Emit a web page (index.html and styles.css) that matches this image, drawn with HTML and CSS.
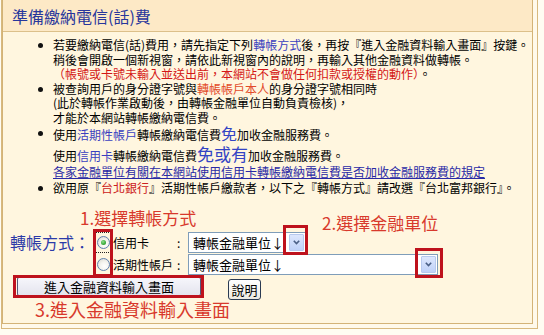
FILE: index.html
```html
<!DOCTYPE html>
<html lang="zh-Hant">
<head>
<meta charset="utf-8">
<title>準備繳納電信(話)費</title>
<link rel="stylesheet" href="styles.css">
</head>
<body>
<div class="outer">
  <div class="inner">
    <div class="head"><h1 class="title">準備繳納電信(話)費</h1></div>
    <div class="content">
      <ul class="notes">
        <li>若要繳納電信(話)費用，請先指定下列<span class="blue">轉帳方式</span>後，再按『進入金融資料輸入畫面』按鍵。<br>稍後會開啟一個新視窗，請依此新視窗內的說明，再輸入其他金融資料做轉帳。<br><span class="red">（帳號或卡號未輸入並送出前，本網站不會做任何扣款或授權的動作）</span>。</li>
        <li>被查詢用戶的身分證字號與<span class="orange">轉帳帳戶本人</span>的身分證字號相同時<br>(此於轉帳作業啟動後，由轉帳金融單位自動負責檢核)，<br>才能於本網站轉帳繳納電信費。</li>
        <li>使用<span class="blue">活期性帳戶</span>轉帳繳納電信費<span class="big">免</span>加收金融服務費。
          <div class="line2">使用<span class="blue">信用卡</span>轉帳繳納電信費<span class="big">免或有</span>加收金融服務費。</div>
          <div class="line3"><a class="rule-link" href="#">各家金融單位有關在本網站使用信用卡轉帳繳納電信費是否加收金融服務費的規定</a></div>
        </li>
        <li>欲用原『<span class="red2">台北銀行</span>』活期性帳戶繳款者，以下之『轉帳方式』請改選『台北富邦銀行』。</li>
      </ul>

      <div class="form">
        <div class="step step1">1.選擇轉帳方式</div>
        <div class="method">
          <div class="method-label">轉帳方式：</div>
          <div class="options">
            <span class="radio-cell focus"><span class="radio checked"></span></span>
            <span class="opt-label">信用卡</span>
            <span class="colon">:</span>
            <div class="select s1">
              <span class="sel-text">轉帳金融單位↓</span>
              <span class="sel-btn"><svg width="7" height="5" viewBox="0 0 7 5"><polyline points="0.8,0.8 3.5,3.6 6.2,0.8" fill="none" stroke="#4a5f86" stroke-width="1.6"/></svg></span>
            </div>
            <span class="radio-cell"><span class="radio"></span></span>
            <span class="opt-label">活期性帳戶</span>
            <span class="colon">:</span>
            <div class="select s2">
              <span class="sel-text">轉帳金融單位↓</span>
              <span class="sel-btn"><svg width="7" height="5" viewBox="0 0 7 5"><polyline points="0.8,0.8 3.5,3.6 6.2,0.8" fill="none" stroke="#4a5f86" stroke-width="1.6"/></svg></span>
            </div>
          </div>
        </div>
        <div class="actions">
          <button class="btn btn-main" type="button">進入金融資料輸入畫面</button>
          <button class="btn btn-help" type="button">說明</button>
        </div>
        <div class="step step3">3.進入金融資料輸入畫面</div>
      </div>
    </div>

    <div class="step step2">2.選擇金融單位</div>
    <span class="mark mark-radio"></span>
    <span class="mark mark-sel1"></span>
    <span class="mark mark-sel2"></span>
    <span class="mark mark-btn"></span>
  </div>
</div>
</body>
</html>
```

FILE: styles.css
```css
html, body {
  margin: 0;
  padding: 0;
  background: #fffcf2;
}
body {
  font-family: "Noto Sans CJK TC", "Noto Sans", sans-serif;
  font-size: 12px;
  color: #000;
}
.outer {
  margin-left: 1px;
  width: 531px;
  border: 1px solid #d8b97e;
  border-top: none;
  padding: 0 4px 4px 0;
  background: #fff9ea;
}
.inner {
  position: relative;
  border: 1px solid #d3b377;
  border-top: none;
  background: #fff6df;
  height: 324px;
  box-sizing: border-box;
}
.head {
  height: 31px;
  background: #fde9c6;
  border-bottom: 1px solid #dcc08a;
  display: flex;
  align-items: center;
  padding-left: 9px;
}
.title {
  margin: 0;
  font-size: 16px;
  font-weight: normal;
  color: #27369c;
  line-height: 20px;
}
.notes {
  list-style: none;
  margin: 6px 0 0;
  padding: 0 0 0 50px;
  white-space: nowrap;
  line-height: 14.6px;
}
.notes li {
  position: relative;
}
.notes li::before {
  content: "";
  position: absolute;
  left: -15px;
  top: 5px;
  width: 5px;
  height: 5px;
  border-radius: 50%;
  background: #111;
}
.blue { color: #3a3fc0; }
.red { color: #d41616; }
.red2 { color: #cc2020; }
.orange { color: #e24a2a; }
.big {
  font-size: 16px;
  color: #3344c4;
  line-height: 14px;
}
.line2 {
  margin-top: 4px;
  line-height: 19px;
}
.line2 .big { font-size: 17px; }
.line3 { line-height: 14.6px; margin-bottom: 1px; }
.rule-link {
  color: #2a2aa6;
  text-decoration: underline;
}

.form {
  margin-top: 12px;
}
.step {
  font-size: 17px;
  line-height: 22px;
  color: #d8392c;
  white-space: nowrap;
}
.step1 { margin-left: 77px; }
.step3 { margin-left: 32px; margin-top: -1px; font-size: 18px; line-height: 20px; }
.step2 {
  position: absolute;
  left: 319px;
  top: 212px;
}

.method {
  display: flex;
  align-items: flex-start;
  padding-left: 7px;
  margin-top: 3px;
}
.method-label {
  width: 84px;
  font-size: 16px;
  line-height: 21px;
  color: #2b3aa8;
  white-space: nowrap;
}
.options {
  display: grid;
  grid-template-columns: 19px 62px 13px auto;
  grid-auto-rows: 21px;
  row-gap: 1px;
  align-items: center;
}
.radio-cell {
  height: 21px;
  display: flex;
  align-items: center;
  justify-content: center;
  box-sizing: border-box;
}
.radio-cell.focus {
  outline: 1px dotted #222;
  outline-offset: -1px;
}
.radio {
  width: 13px;
  height: 13px;
  border-radius: 50%;
  border: 1px solid #5d7fae;
  box-sizing: border-box;
  background: radial-gradient(circle at 60% 65%, #ffffff 0%, #f4f3ee 45%, #d6d4cc 100%);
  position: relative;
}
.radio.checked::after {
  content: "";
  position: absolute;
  left: 3px;
  top: 3px;
  width: 5px;
  height: 5px;
  border-radius: 50%;
  background: radial-gradient(circle at 40% 35%, #8de08d 0%, #3fae3f 55%, #21811f 100%);
}
.opt-label {
  font-size: 12px;
  line-height: 21px;
  white-space: nowrap;
}
.colon {
  font-size: 12px;
  line-height: 21px;
  padding-left: 2px;
}
.select {
  height: 21px;
  box-sizing: border-box;
  border: 1px solid #7f9db9;
  background: #fff;
  display: flex;
  align-items: center;
  justify-content: space-between;
  padding: 0 1px 0 4px;
}
.s1 { width: 118px; }
.s2 { width: 250px; }
.sel-text {
  font-size: 13px;
  line-height: 19px;
  white-space: nowrap;
}
.sel-btn {
  width: 15px;
  height: 17px;
  box-sizing: border-box;
  border: 1px solid #b7c9ee;
  border-radius: 1px;
  background: linear-gradient(#dde7fd, #bfd1f8);
  display: flex;
  align-items: center;
  justify-content: center;
}

.actions {
  display: flex;
  align-items: flex-start;
  gap: 27px;
  margin-top: 2px;
  padding-left: 14px;
}
.btn {
  font-family: "Noto Sans CJK TC", "Noto Sans", sans-serif;
  font-size: 13px;
  color: #000;
  padding: 0;
  margin: 0;
  box-sizing: border-box;
  line-height: 17px;
}
.btn-main {
  width: 184px;
  height: 19px;
  border: 1px solid #55587a;
  border-radius: 2px;
  background: linear-gradient(#f6f6fb, #e4e4ee);
}
.btn-help {
  width: 33px;
  height: 21px;
  margin-top: 2px;
  border: 1px solid #2a3a52;
  border-radius: 3px;
  background: linear-gradient(#ffffff, #eceae2);
}

.mark {
  position: absolute;
  border: 3px solid #be121d;
  box-sizing: border-box;
}
.mark-radio { left: 90px; top: 229px; width: 20px; height: 48px; }
.mark-sel1 { left: 280px; top: 225px; width: 25px; height: 30px; }
.mark-sel2 { left: 412px; top: 248px; width: 28px; height: 30px; }
.mark-btn { left: 10px; top: 275px; width: 191px; height: 23px; }
```
